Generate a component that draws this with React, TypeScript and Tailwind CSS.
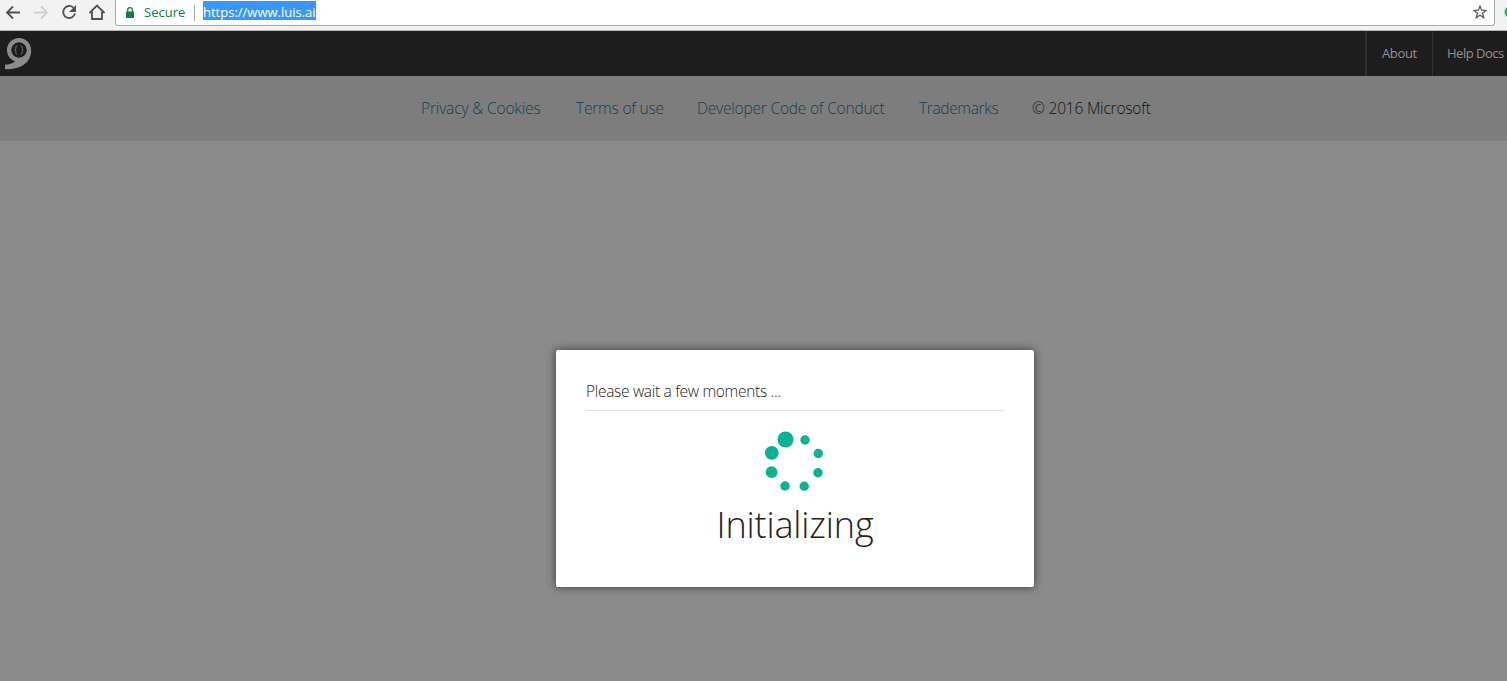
import React from "react";

const links = [
  { label: "Privacy & Cookies", cls: "w-[155px] tracking-[-0.15px]" },
  { label: "Terms of use", cls: "w-[121px] tracking-[-0.2px]" },
  { label: "Developer Code of Conduct", cls: "w-[222px] tracking-[-0.2px]" },
  { label: "Trademarks", cls: "w-[113px] tracking-[-0.35px]" },
];

function BrowserBar() {
  return (
    <header className="flex h-[31px] w-full shrink-0 items-start border-b border-[#b5b5b5] bg-[#f2f2f2]">
      <svg className="h-[26px] w-[115px] shrink-0" viewBox="0 0 115 26" fill="none" strokeWidth="1.8">
        <path d="M20 12.500H7.500M13 6.500l-6 6 6 6" stroke="#515151" />
        <path d="M34 12.500h12.500M41 6.500l6 6-6 6" stroke="#d0d0d0" />
        <path d="M73.300 7.600A6 6 0 1 0 75 13.500" stroke="#515151" />
        <path d="M76 5v7h-7z" fill="#515151" />
        <path d="M89.500 13L97 5.500l7.500 7.500M92 11.500V19h10v-7.500" stroke="#515151" />
      </svg>
      <div className="flex h-[26px] w-[1380px] shrink-0 items-center rounded-b-[3px] border-x border-b border-[#aaaaaa] bg-white">
        <svg className="ml-[10px] h-[12px] w-[8px] shrink-0" viewBox="0 0 8 12">
          <rect x="0" y="4.500" width="8" height="6.500" rx="0.500" fill="#0b8043" />
          <path d="M1.700 5V3a2.300 2.300 0 0 1 4.600 0v2" fill="none" stroke="#0b8043" strokeWidth="1.300" />
        </svg>
        <span className="ml-[10px] w-[50px] whitespace-nowrap text-[13px] leading-[17px] text-[#0b8043]">Secure</span>
        <span className="h-[16px] w-px bg-[#aaaaaa]" />
        <span className="mb-[4px] ml-[8px] h-[19px] w-[113px] whitespace-nowrap bg-[#3797fb] text-[13px] leading-[23px] text-white">https://www.luis.ai</span>
        <svg className="mr-[7px] mb-[2px] ml-auto h-[14px] w-[14px]" viewBox="0 0 14 14" fill="none" stroke="#5a5a5a" strokeWidth="1.300">
          <path d="M7 1.200l1.600 4 4.300.3-3.300 2.700 1.100 4.300L7 10.200l-3.700 2.300 1.100-4.300L1.100 5.500l4.300-.3z" />
        </svg>
      </div>
      <svg className="h-[26px] w-[12px] shrink-0" viewBox="0 0 12 26">
        <circle cx="15" cy="12" r="5.500" fill="#1bb765" />
      </svg>
    </header>
  );
}

function Spinner() {
  return (
    <svg className="mr-[2px] h-[64px] w-[64px]" viewBox="0 0 64 64" fill="#08b393">
      <circle cx="23.500" cy="10.500" r="8" />
      <circle cx="43" cy="11" r="4.700" />
      <circle cx="56.300" cy="24.500" r="4.700" />
      <circle cx="56" cy="43.800" r="4.700" />
      <circle cx="42.200" cy="57.200" r="4.700" />
      <circle cx="23" cy="57" r="4.700" />
      <circle cx="9.600" cy="43.200" r="5.900" />
      <circle cx="9.800" cy="23.800" r="6.900" />
    </svg>
  );
}

export default function App() {
  return (
    <div className="flex h-[681px] w-[1507px] flex-col overflow-hidden bg-[#8b8b8b] font-['Open_Sans','Noto_Sans',sans-serif]">
      <BrowserBar />
      <nav className="flex h-[45px] shrink-0 items-stretch bg-[#1d1d1d] text-[13px] leading-[44px] text-[#919191]">
        <svg className="mt-[5px] ml-[3px] h-[36px] w-[32px]" viewBox="0 0 32 36">
          <circle cx="16" cy="14" r="9.800" fill="none" stroke="#8b8b8b" strokeWidth="4.500" />
          <path d="M28.200 14C28.200 27 18 33.500 2 33.200V28.500C8 28.500 11 27 14 23.500L24 20z" fill="#8b8b8b" />
          <circle cx="16" cy="14" r="7.600" fill="#1d1d1d" />
          <path d="M14.200 9.800c-2 .2-1.200 2.800-1.500 3.500-.2.500-.7.700-1 .7.300 0 .8.200 1 .7.300.7-.5 3.300 1.500 3.500M17.800 9.800c2 .2 1.200 2.800 1.500 3.500.2.500.7.700 1 .7-.3 0-.8.200-1 .7-.3.700.5 3.300-1.500 3.500" fill="none" stroke="#777777" strokeWidth="1" />
        </svg>
        <a className="ml-auto w-[67px] border-l-2 border-[#303030] pl-[15px] tracking-[-0.35px]">About</a>
        <a className="w-[75px] whitespace-nowrap border-l border-[#303030] pl-[14px] tracking-[-0.5px]">Help Docs</a>
      </nav>
      <footer className="flex h-[65px] shrink-0 whitespace-nowrap bg-[#7d7d7d] pl-[421px] text-[15.5px] font-light leading-[65px] text-[#123f56]">
        {links.map((link) => (
          <a key={link.label} className={link.cls}>{link.label}</a>
        ))}
        <span className="tracking-[-0.2px] text-[#111111]">© 2016 Microsoft</span>
      </footer>
      <main className="flex flex-1 items-start pt-[209px] pl-[556px]">
        <section className="flex h-[237px] w-[478px] flex-col rounded-[2px] bg-white px-[30px] pt-[30px] shadow-[0_0_10px_rgba(0,0,0,0.6)]">
          <p className="h-[31px] border-b border-[#dddddd] text-[15.5px] font-light leading-[23px] tracking-[-0.3px] text-[#222222]">Please wait a few moments ...</p>
          <div className="flex flex-col items-center pt-[18px]">
            <Spinner />
            <h1 className="mt-[8px] whitespace-nowrap text-[36px] font-light leading-[48px] tracking-[-0.15px] text-[#222222]">Initializing</h1>
          </div>
        </section>
      </main>
    </div>
  );
}
